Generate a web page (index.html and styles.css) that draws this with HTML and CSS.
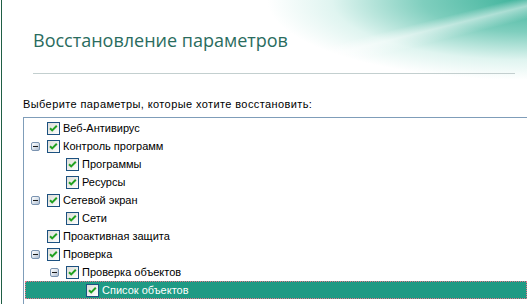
FILE: index.html
```html
<!DOCTYPE html>
<html lang="ru">
<head>
<meta charset="utf-8">
<link rel="stylesheet" href="styles.css">
</head>
<body>
<div class="page">
  <div class="wave"></div>
  <header class="head">
    <h1 class="title">Восстановление параметров</h1>
    <div class="sep"></div>
  </header>
  <p class="prompt">Выберите параметры, которые хотите восстановить:</p>
  <div class="tree">
    <div class="row l0"><span class="exp none"></span><svg class="cb" viewBox="0 0 13 13"><rect x="0.5" y="0.5" width="12" height="12" fill="url(#g)" stroke="#1c5180"/><path d="M3 6.2 L5.2 8.4 L9.8 3.8" fill="none" stroke="#21a121" stroke-width="2"/><defs><linearGradient id="g" x1="0" y1="0" x2="1" y2="1"><stop offset="0" stop-color="#dcdcd7"/><stop offset="1" stop-color="#ffffff"/></linearGradient></defs></svg><span class="lbl">Веб-Антивирус</span></div>
    <div class="row l0"><span class="exp"><i></i></span><svg class="cb" viewBox="0 0 13 13"><rect x="0.5" y="0.5" width="12" height="12" fill="url(#g)" stroke="#1c5180"/><path d="M3 6.2 L5.2 8.4 L9.8 3.8" fill="none" stroke="#21a121" stroke-width="2"/></svg><span class="lbl">Контроль программ</span></div>
    <div class="row l1"><span class="exp none"></span><svg class="cb" viewBox="0 0 13 13"><rect x="0.5" y="0.5" width="12" height="12" fill="url(#g)" stroke="#1c5180"/><path d="M3 6.2 L5.2 8.4 L9.8 3.8" fill="none" stroke="#21a121" stroke-width="2"/></svg><span class="lbl">Программы</span></div>
    <div class="row l1"><span class="exp none"></span><svg class="cb" viewBox="0 0 13 13"><rect x="0.5" y="0.5" width="12" height="12" fill="url(#g)" stroke="#1c5180"/><path d="M3 6.2 L5.2 8.4 L9.8 3.8" fill="none" stroke="#21a121" stroke-width="2"/></svg><span class="lbl">Ресурсы</span></div>
    <div class="row l0"><span class="exp"><i></i></span><svg class="cb" viewBox="0 0 13 13"><rect x="0.5" y="0.5" width="12" height="12" fill="url(#g)" stroke="#1c5180"/><path d="M3 6.2 L5.2 8.4 L9.8 3.8" fill="none" stroke="#21a121" stroke-width="2"/></svg><span class="lbl">Сетевой экран</span></div>
    <div class="row l1"><span class="exp none"></span><svg class="cb" viewBox="0 0 13 13"><rect x="0.5" y="0.5" width="12" height="12" fill="url(#g)" stroke="#1c5180"/><path d="M3 6.2 L5.2 8.4 L9.8 3.8" fill="none" stroke="#21a121" stroke-width="2"/></svg><span class="lbl">Сети</span></div>
    <div class="row l0"><span class="exp none"></span><svg class="cb" viewBox="0 0 13 13"><rect x="0.5" y="0.5" width="12" height="12" fill="url(#g)" stroke="#1c5180"/><path d="M3 6.2 L5.2 8.4 L9.8 3.8" fill="none" stroke="#21a121" stroke-width="2"/></svg><span class="lbl">Проактивная защита</span></div>
    <div class="row l0"><span class="exp"><i></i></span><svg class="cb" viewBox="0 0 13 13"><rect x="0.5" y="0.5" width="12" height="12" fill="url(#g)" stroke="#1c5180"/><path d="M3 6.2 L5.2 8.4 L9.8 3.8" fill="none" stroke="#21a121" stroke-width="2"/></svg><span class="lbl">Проверка</span></div>
    <div class="row l1"><span class="exp"><i></i></span><svg class="cb" viewBox="0 0 13 13"><rect x="0.5" y="0.5" width="12" height="12" fill="url(#g)" stroke="#1c5180"/><path d="M3 6.2 L5.2 8.4 L9.8 3.8" fill="none" stroke="#21a121" stroke-width="2"/></svg><span class="lbl">Проверка объектов</span></div>
    <div class="row l2 sel"><span class="exp none"></span><svg class="cb" viewBox="0 0 13 13"><rect x="0.5" y="0.5" width="12" height="12" fill="url(#g)" stroke="#1c5180"/><path d="M3 6.2 L5.2 8.4 L9.8 3.8" fill="none" stroke="#21a121" stroke-width="2"/></svg><span class="lbl">Список объектов</span></div>
  </div>
</div>
</body>
</html>
```
FILE: styles.css
```css
html, body {
  margin: 0;
  padding: 0;
  background: #fff;
  overflow: hidden;
}
body {
  width: 527px;
  height: 304px;
}
.page {
  position: relative;
  margin-left: 1px;
  border-left: 1px solid #1f5e45;
  height: 304px;
  box-sizing: border-box;
  overflow: hidden;
}
.wave {
  position: absolute;
  top: 0;
  right: 0;
  width: 280px;
  height: 95px;
  pointer-events: none;
  background:
    linear-gradient(166deg, rgba(255,255,255,0) 0, rgba(255,255,255,0) 40%, rgba(255,255,255,0.5) 46%, rgba(255,255,255,0) 54%),
    radial-gradient(ellipse 260px 80px at 100% 0, rgba(60,178,154,1) 0, rgba(84,190,168,0.75) 40%, rgba(150,220,205,0.3) 75%, rgba(255,255,255,0) 100%);
}
.head {
  position: relative;
  padding: 26px 12px 0 31px;
}
.title {
  margin: 0;
  font-family: "Open Sans", "Noto Sans", sans-serif;
  font-weight: 400;
  font-size: 18px;
  line-height: 28px;
  color: #2a6c5e;
}
.sep {
  margin-top: 19px;
  height: 1px;
  background: #c3cfcf;
}
.prompt {
  margin: 23px 0 0 21px;
  font-family: "Liberation Sans", Arial, sans-serif;
  font-size: 11px;
  letter-spacing: 0.4px;
  line-height: 14px;
  color: #000;
}
.tree {
  margin: 6px 0 0 21px;
  border: 1px solid #7f9db9;
  border-right: none;
  padding-top: 1px;
  height: 200px;
  font-family: "Liberation Sans", Arial, sans-serif;
  font-size: 11px;
  color: #000;
}
.row {
  display: flex;
  align-items: center;
  height: 18px;
  box-sizing: border-box;
  margin-left: 1px;
}
.row.l0 { padding-left: 6px; }
.row.l1 { padding-left: 25px; }
.row.l2 { padding-left: 44px; }
.exp {
  width: 9px;
  height: 9px;
  margin-right: 7px;
  box-sizing: border-box;
  border: 1px solid #7a93b0;
  border-radius: 2px;
  background: linear-gradient(135deg, #ffffff 0, #dfe6ee 45%, #aebdd0 100%);
  position: relative;
  flex: none;
}
.exp i {
  position: absolute;
  left: 1px;
  top: 3px;
  width: 5px;
  height: 1px;
  background: #1a1a1a;
}
.exp.none {
  border: none;
  background: none;
}
.cb {
  width: 13px;
  height: 13px;
  flex: none;
  margin-right: 3px;
}
.lbl {
  white-space: nowrap;
}
.sel {
  background: #1f9a84;
  color: #fff;
  border: 1px dotted #e9748a;
}
```
